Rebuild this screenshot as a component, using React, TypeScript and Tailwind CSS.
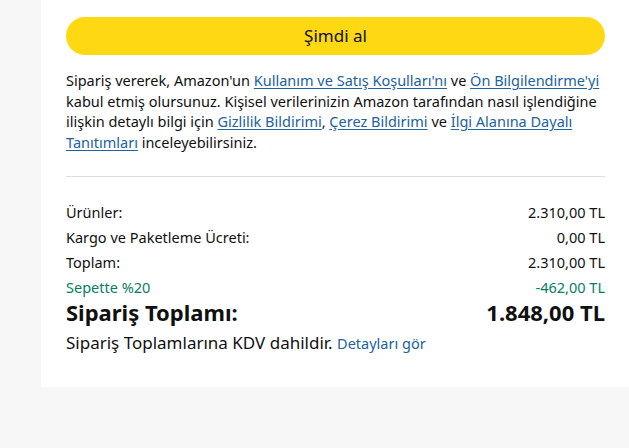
import React from "react";

const Link: React.FC<{ children: React.ReactNode }> = ({ children }) => (
  <a href="#" className="text-[#2162a1] underline underline-offset-2">
    {children}
  </a>
);

const Row: React.FC<{ label: string; value: string; green?: boolean }> = ({ label, value, green }) => (
  <div className={`flex justify-between h-[25px] items-center ${green ? "text-[#067d62]" : "text-[#0f1111]"}`}>
    <span>{label}</span>
    <span>{value}</span>
  </div>
);

const App: React.FC = () => {
  return (
    <div className="min-h-screen bg-[#f7f7f7] font-['Noto_Sans',sans-serif] text-[#0f1111]">
      <div className="ml-[41px] bg-white h-[387px] pl-[25px] pr-[24px] pt-[17px]">
        <button className="w-full h-[38px] rounded-full bg-[#ffd814] text-[17px] leading-[24px] text-[#0f1111]">
          Şimdi al
        </button>

        <p className="mt-[15px] text-[14.5px] leading-[20.5px]">
          Sipariş vererek, Amazon'un <Link>Kullanım ve Satış Koşulları'nı</Link> ve{" "}
          <Link>Ön Bilgilendirme'yi</Link> kabul etmiş olursunuz. Kişisel verilerinizin Amazon tarafından
          nasıl işlendiğine ilişkin detaylı bilgi için <Link>Gizlilik Bildirimi</Link>,{" "}
          <Link>Çerez Bildirimi</Link> ve <Link>İlgi Alanına Dayalı Tanıtımları</Link> inceleyebilirsiniz.
        </p>

        <div className="mt-[24px] border-t border-[#dddddd]" />

        <div className="mt-[23px] text-[14.5px]">
          <Row label="Ürünler:" value="2.310,00 TL" />
          <Row label="Kargo ve Paketleme Ücreti:" value="0,00 TL" />
          <Row label="Toplam:" value="2.310,00 TL" />
          <Row label="Sepette %20" value="-462,00 TL" green />
        </div>

        <div className="flex justify-between items-center h-[24px] text-[22px] font-bold">
          <span>Sipariş Toplamı:</span>
          <span>1.848,00 TL</span>
        </div>

        <div className="mt-[7px] text-[17px] leading-[24px]">
          Sipariş Toplamlarına KDV dahildir.{" "}
          <a href="#" className="text-[14.5px] text-[#2162a1]">
            Detayları gör
          </a>
        </div>
      </div>
    </div>
  );
};

export default App;
